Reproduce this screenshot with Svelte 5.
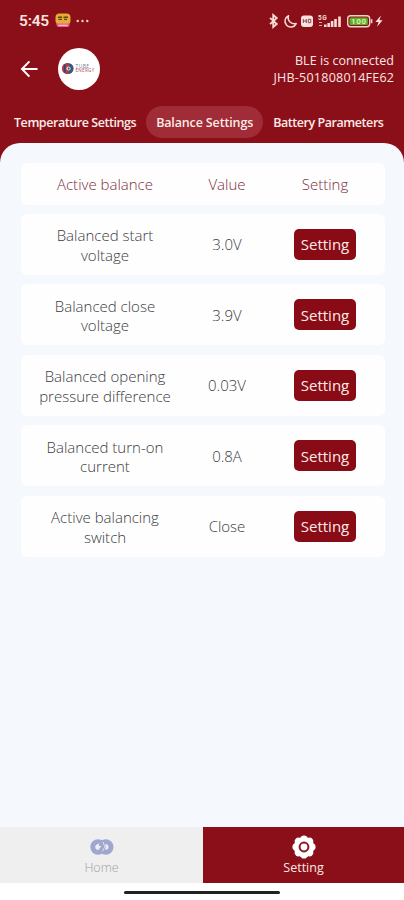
<script lang="ts">
    type Row = { name: string[]; value: string };

    const tabs = ['Temperature Settings', 'Balance Settings', 'Battery Parameters'];
    let activeTab = $state(1);

    const rows: Row[] = [
        { name: ['Balanced start', 'voltage'], value: '3.0V' },
        { name: ['Balanced close', 'voltage'], value: '3.9V' },
        { name: ['Balanced opening', 'pressure difference'], value: '0.03V' },
        { name: ['Balanced turn-on', 'current'], value: '0.8A' },
        { name: ['Active balancing', 'switch'], value: 'Close' }
    ];

    // Teeth of the gear icon, in degrees
    const teeth = [0, 45, 90, 135, 180, 225, 270, 315];
</script>

<div class="screen">
    <header>
        <div class="status-bar">
            <div class="status-left">
                <span class="clock">5:45</span>
                <svg class="app-badge" width="16" height="15" viewBox="0 0 16 15">
                    <rect x="0.5" y="0.5" width="15" height="11" rx="4" fill="#e5ac35" />
                    <path d="M3 4.3h4M8.5 4.3h4.5M3.5 6.4h3.5M9 6.4h3" stroke="#61401a" stroke-width="1.4" />
                    <path d="M1 10.5h14l-1.5 3.5h-11z" fill="#ee5a93" />
                    <path d="M3.5 12.3h9" stroke="#ffd3df" stroke-width="1" />
                </svg>
                <svg width="13" height="4" viewBox="0 0 13 4" fill="#f3cfc8">
                    <circle cx="1.7" cy="2" r="1.2" />
                    <circle cx="6.5" cy="2" r="1.2" />
                    <circle cx="11.3" cy="2" r="1.2" />
                </svg>
            </div>
            <svg class="status-right" width="118" height="16" viewBox="0 0 118 16">
                <path d="M2 4.8l6.8 6.2-3.6 3V2l3.6 3L2 11.2" fill="none" stroke="#f8dcd8" stroke-width="1.8" />
                <path d="M20.5 2.7A5.9 5.9 0 1 0 28.2 10.6C23.4 11.4 19 8 20.5 2.7z" fill="none" stroke="#f8dcd8" stroke-width="1.5" stroke-linejoin="round" />
                <rect x="33" y="2.5" width="12" height="11.5" rx="3" fill="#f9e2df" />
                <path d="M35.3 6v4M35.3 8h3M38.3 6v4M40.3 6.3h2.5v3.4h-2.5z" fill="none" stroke="#94404a" stroke-width="1" />
                <text x="50" y="6.8" class="network">5G</text>
                <path d="M51 9.5h3M51 12.5h3" stroke="#dca4a3" stroke-width="1.2" />
                <path d="M57.3 11.5V14M60.7 10v4M64.1 8v6M67.5 6v8M71.5 3.5V14" stroke="#f8dcd8" stroke-width="2.6" />
                <rect x="79.7" y="2.7" width="22" height="11" rx="3" fill="none" stroke="#f0d3cd" stroke-width="1.4" />
                <rect x="81.5" y="4.5" width="18.4" height="7.4" rx="1.5" fill="#5fae26" />
                <text x="90.8" y="11.2" class="charge">100</text>
                <path d="M103.6 6.2v4" stroke="#f0d3cd" stroke-width="1.6" />
                <path d="M113 2.6l-5.6 6.4h3.2l-1.5 4.8 5.4-6.6h-3.2z" fill="#fbe9e5" />
            </svg>
        </div>

        <div class="title-bar">
            <svg class="back" width="18" height="18" viewBox="0 0 18 18">
                <path d="M17.5 9H2.5M9.4 1.4L2 9l7.4 7.6" fill="none" stroke="#fff" stroke-width="2" />
            </svg>
            <div class="logo">
                <svg width="36" height="14" viewBox="0 0 36 14">
                    <circle cx="7" cy="6.5" r="5.6" fill="#39587a" />
                    <path d="M6.5 0.9a5.6 5.6 0 0 0 0 11.2L8 9.3 5.5 6.5 8 3.7z" fill="#ba3a4b" />
                    <path d="M3.7 2.5v8" stroke="#2a4a70" stroke-width="1.8" />
                    <circle cx="7.5" cy="6.5" r="2.1" fill="#e4dce4" />
                    <circle cx="7.7" cy="6.5" r="1" fill="#8d2a42" />
                    <text x="14.5" y="5.6" class="logo-name">TUBE</text>
                    <text x="14.5" y="10" class="logo-sub">ENERGY</text>
                </svg>
            </div>
            <div class="device">
                <div class="ble">BLE is connected</div>
                <div class="device-id">JHB-501808014FE62</div>
            </div>
        </div>

        <nav class="tabs">
            {#each tabs as tab, i}
                <button class="tab" class:active={i === activeTab} onclick={() => (activeTab = i)}>{tab}</button>
            {/each}
        </nav>
    </header>

    <main>
        <div class="row heading">
            <span>Active balance</span>
            <span>Value</span>
            <span>Setting</span>
        </div>
        {#each rows as row}
            <div class="row">
                <span class="name">{row.name[0]}<br />{row.name[1]}</span>
                <span class="value">{row.value}</span>
                <span><button class="set">Setting</button></span>
            </div>
        {/each}
    </main>

    <footer>
        <div class="bottom-tab home">
            <svg width="24" height="18" viewBox="0 0 24 18">
                <circle cx="8" cy="9" r="5.2" fill="none" stroke="#9fa6cf" stroke-width="5" />
                <circle cx="15.8" cy="9" r="5.2" fill="none" stroke="#9fa6cf" stroke-width="5" />
                <path d="M9.4 4.6L5.8 9.4h2.6l-.6 3.4 3.6-4.9H8.8z" fill="#eff0f5" />
                <path d="M13 4l1.8 4.7-2.4 4.6" fill="none" stroke="#dcdfee" stroke-width="1" />
            </svg>
            <span>Home</span>
        </div>
        <div class="bottom-tab setting">
            <svg width="24" height="24" viewBox="-12 -12 24 24">
                <circle r="10.3" fill="#fff" />
                {#each teeth as angle}
                    <circle cy="-8.2" r="3.4" fill="#fff" transform="rotate({angle})" />
                {/each}
                <circle r="4.4" fill="none" stroke="#8e1524" stroke-width="2" />
            </svg>
            <span>Setting</span>
        </div>
    </footer>
    <div class="gesture-area"><div class="gesture-bar"></div></div>
</div>

<style>
    :global(body) {
        margin: 0;
    }

    .screen {
        display: flex;
        flex-direction: column;
        width: 404px;
        height: 900px;
        overflow: hidden;
        background: #8b0f19;
        font-family: 'Open Sans', 'Noto Sans', sans-serif;
    }

    button {
        border: 0;
        padding: 0;
        font-family: inherit;
        white-space: nowrap;
    }

    svg {
        display: block;
        flex: none;
    }

    header {
        height: 142.5px;
        color: #fff;
    }

    .status-bar {
        display: flex;
        justify-content: space-between;
        align-items: center;
        height: 41px;
        padding: 0 18px 0 19px;
    }

    .status-left {
        display: flex;
        align-items: center;
    }

    .clock {
        width: 36px;
        font-family: Roboto, sans-serif;
        font-size: 15.5px;
        font-weight: 600;
        letter-spacing: -0.2px;
        color: #fbe3df;
    }

    .app-badge {
        margin-right: 5px;
    }

    .network {
        font: 700 6.5px Roboto, sans-serif;
        fill: #f8dcd8;
        letter-spacing: 0.6px;
    }

    .charge {
        font: 700 8px Roboto, sans-serif;
        fill: #d5f3b8;
        text-anchor: middle;
        letter-spacing: 0.6px;
    }

    .title-bar {
        display: flex;
        align-items: center;
        height: 56px;
        padding: 0 10px 0 20px;
    }

    .logo {
        display: flex;
        align-items: center;
        justify-content: center;
        width: 42px;
        height: 42px;
        margin-left: 20px;
        border-radius: 50%;
        background: #fff;
    }

    .logo-name {
        font: 4.8px 'Open Sans', sans-serif;
        letter-spacing: 0.5px;
        fill: #6d7d93;
    }

    .logo-sub {
        font: 4.6px 'Open Sans', sans-serif;
        letter-spacing: 0.3px;
        fill: #b34b59;
    }

    .device {
        margin-left: auto;
        text-align: right;
        font-size: 12.5px;
        font-weight: 500;
        line-height: 17px;
        color: #fbe6e3;
    }

    .ble {
        letter-spacing: 0.06px;
    }

    .device-id {
        letter-spacing: 0.24px;
        margin-right: -0.24px;
    }

    .tabs {
        display: flex;
        align-items: center;
        height: 50px;
        padding-left: 4px;
    }

    .tab {
        height: 32px;
        padding: 0 10px;
        border-radius: 16px;
        background: none;
        color: #fdebe7;
        font-size: 12.5px;
        font-weight: 600;
        letter-spacing: -0.44px;
    }

    .tab.active {
        background: #9f2c36;
        letter-spacing: -0.14px;
    }

    main {
        display: flex;
        flex: 1;
        flex-direction: column;
        gap: 9.5px;
        padding: 20px 19px 0 21px;
        border-radius: 20px 20px 0 0;
        background: #f5f9fe;
    }

    .row {
        display: grid;
        grid-template-columns: 168px 76px 120px;
        align-items: center;
        height: 61px;
        border-radius: 6px;
        background: #fefefe;
        color: #3c3c3e;
        font-size: 15px;
        font-weight: 350;
        line-height: 19.5px;
        text-align: center;
    }

    .row.heading {
        height: 42px;
        margin-bottom: -0.5px;
        color: #7f2d40;
    }

    .heading span,
    .value {
        padding-top: 2px;
    }

    .name {
        padding-top: 3px;
    }

    .set {
        display: block;
        width: 62px;
        height: 31px;
        margin: 0 auto;
        border-radius: 5px;
        background: #890b16;
        color: #fdeae6;
        font-size: 15px;
        font-weight: 500;
    }

    footer {
        display: flex;
        height: 56px;
    }

    .bottom-tab {
        display: flex;
        flex-direction: column;
        align-items: center;
        width: 203px;
        font-size: 12.5px;
        line-height: 16px;
    }

    .home {
        padding-top: 11px;
        box-sizing: border-box;
        background: #efefef;
        color: #a2a2a6;
        font-weight: 300;
    }

    .home span {
        margin-top: 4px;
    }

    .setting {
        flex: 1;
        padding-top: 8px;
        box-sizing: border-box;
        background: #8b0f19;
        color: #fce8e5;
        font-weight: 400;
    }

    .setting span {
        margin-top: 1px;
    }

    .gesture-area {
        display: flex;
        justify-content: center;
        height: 17px;
        background: #fff;
    }

    .gesture-bar {
        width: 156px;
        height: 3px;
        margin-top: 8px;
        border-radius: 2px;
        background: #222;
    }
</style>
